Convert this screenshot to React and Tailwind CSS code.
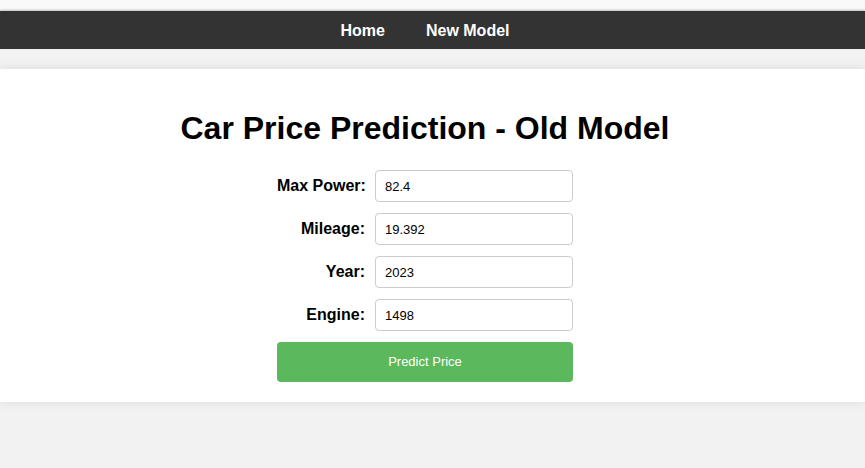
export default function App() {
  const fields = [
    ["Max Power:", "82.4"],
    ["Mileage:", "19.392"],
    ["Year:", "2023"],
    ["Engine:", "1498"],
  ];
  return (
    <div className="min-h-[468px] bg-[#f2f2f2] font-['Liberation_Sans',Arial,sans-serif]">
      <div className="h-[11px] bg-[#f9f9f9]"></div>
      <nav className="h-[38px] bg-[#333333] flex items-center justify-center pr-[15px] pt-[2px] gap-[41px] shadow-[0_-1px_2px_rgba(0,0,0,0.25)]">
        <a className="text-white font-bold text-[16px]">Home</a>
        <a className="text-white font-bold text-[16px]">New Model</a>
      </nav>
      <div className="h-[20px]"></div>
      <div className="bg-white h-[333px] shadow-[0_0_10px_rgba(0,0,0,0.1)] flex flex-col items-center pr-[15px]">
        <h1 className="mt-[41px] text-[32px] leading-[37px] font-bold text-black">
          Car Price Prediction - Old Model
        </h1>
        <div className="mt-[23px] w-[296px] flex flex-col gap-[11px]">
          {fields.map(([label, value]) => (
            <div key={label} className="flex items-center">
              <label className="w-[88px] shrink-0 whitespace-nowrap text-right font-bold text-[16px] text-black">{label}</label>
              <input
                readOnly
                value={value}
                className="ml-[10px] w-[198px] h-[32px] border border-[#cccccc] rounded-[4px] px-[9px] text-[13px] text-black bg-white outline-none"
              />
            </div>
          ))}
          <button className="h-[40px] w-full bg-[#5cb85c] text-white text-[13px] rounded-[4px]">
            Predict Price
          </button>
        </div>
      </div>
    </div>
  );
}
